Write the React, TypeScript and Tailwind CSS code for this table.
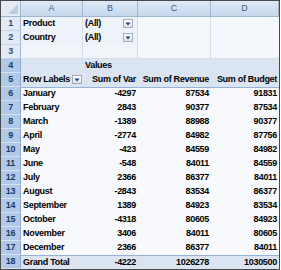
import React from "react";

const cols = "grid grid-cols-[20px_62px_55px_73px_68px]";

const months: [string, number, number, number][] = [
  ["January", -4297, 87534, 91831],
  ["February", 2843, 90377, 87534],
  ["March", -1389, 88988, 90377],
  ["April", -2774, 84982, 87756],
  ["May", -423, 84559, 84982],
  ["June", -548, 84011, 84559],
  ["July", 2366, 86377, 84011],
  ["August", -2843, 83534, 86377],
  ["September", 1389, 84923, 83534],
  ["October", -4318, 80605, 84923],
  ["November", 3406, 84011, 80605],
  ["December", 2366, 86377, 84011],
];

// little filter button used by pivot fields
const DropBtn = () => (
  <span className="w-[10px] h-[9px] border border-[#9fa9b8] bg-gradient-to-b from-white to-[#dde4ee] flex items-center justify-center shrink-0">
    <svg width="6" height="4" viewBox="0 0 6 4">
      <path d="M0.5 0.5 L5.5 0.5 L3 3.5 Z" fill="#1f3c78" />
    </svg>
  </span>
);

const RowNum = ({ n, hot }: { n: number; hot?: boolean }) => (
  <div
    className={`h-[14px] flex items-center justify-center border-r border-b text-[9px] ${
      hot
        ? "bg-[#b1c9e8] border-r-[#8ea9cc] border-b-[#d6e2f1] text-[#1d3a63]"
        : "bg-[#e2eaf5] border-r-[#9eb6ce] border-b-[#c3d2e4] text-[#2f4d74]"
    }`}
  >
    {n}
  </div>
);

const App = () => {
  return (
    <div
      className="w-[281px] h-[270px] bg-white text-black"
      style={{ fontFamily: '"Liberation Sans", Arial, sans-serif' }}
    >
      <div className="w-[280px] h-[270px] border border-[#4a4a4a] overflow-hidden">
        {/* column headers */}
        <div className={`${cols} h-[16px] border-b border-[#9eb6ce] text-[9px] text-[#3d5a80]`}>
          <div className="relative bg-[#e4ebf5] border-r border-[#9eb6ce]">
            <svg className="absolute right-[2px] bottom-[2px]" width="10" height="10" viewBox="0 0 10 10">
              <path d="M10 0 L10 10 L0 10 Z" fill="#c2ccd8" />
            </svg>
          </div>
          {["A", "B", "C", "D"].map((c) => (
            <div
              key={c}
              className="flex items-center justify-center bg-gradient-to-b from-[#dfe9f5] to-[#c6d8ee] border-r border-[#9eb6ce]"
            >
              {c}
            </div>
          ))}
        </div>

        <div className="text-[9px] font-bold tracking-[-0.3px]">
          {/* report filters */}
          {[
            ["Product", "(All)"],
            ["Country", "(All)"],
          ].map(([label, val], i) => (
            <div key={label} className={`${cols} h-[14px]`}>
              <RowNum n={i + 1} />
              <div className="flex items-center pl-[2px] bg-[#eef3f9] border-r border-b border-[#d5dde8]">{label}</div>
              <div className="flex items-center justify-between pl-[2px] pr-[4px] bg-[#eef3f9] border-r border-b border-[#d5dde8]">
                <span>{val}</span>
                <DropBtn />
              </div>
              <div className="bg-[#f4f7fb] border-r border-b border-[#d5dde8]" />
              <div className="bg-[#f4f7fb] border-b border-[#d5dde8]" />
            </div>
          ))}
          <div className={`${cols} h-[14px]`}>
            <RowNum n={3} />
            <div className="bg-[#f1f5fa] border-r border-b border-[#d5dde8]" />
            <div className="bg-[#f1f5fa] border-r border-b border-[#d5dde8]" />
            <div className="bg-[#f4f7fb] border-r border-b border-[#d5dde8]" />
            <div className="bg-[#f4f7fb] border-b border-[#d5dde8]" />
          </div>

          {/* pivot header */}
          <div className={`${cols} h-[14px]`}>
            <RowNum n={4} hot />
            <div className="bg-[#dbe5f1]" />
            <div className="col-span-3 flex items-center pl-[2px] bg-[#dbe5f1]">Values</div>
          </div>
          <div className={`${cols} h-[14px]`}>
            <RowNum n={5} hot />
            <div className="flex items-center justify-between pl-[2px] pr-[1px] bg-[#dbe5f1] border-b border-[#95b3d7]">
              <span>Row Labels</span>
              <DropBtn />
            </div>
            <div className="flex items-center justify-end pr-[2px] bg-[#dbe5f1] border-b border-[#95b3d7]">Sum of Var</div>
            <div className="flex items-center justify-end pr-[2px] bg-[#dbe5f1] border-b border-[#95b3d7]">Sum of Revenue</div>
            <div className="flex items-center justify-end pr-[2px] bg-[#dbe5f1] border-b border-[#95b3d7]">Sum of Budget</div>
          </div>

          {/* month rows */}
          {months.map(([m, v, r, b], i) => (
            <div key={m} className={`${cols} h-[14px] bg-[#f7f9fc]`}>
              <RowNum n={i + 6} hot />
              <div className="flex items-center pl-[2px]">{m}</div>
              <div className="flex items-center justify-end pr-[2px]">{v}</div>
              <div className="flex items-center justify-end pr-[2px]">{r}</div>
              <div className="flex items-center justify-end pr-[2px]">{b}</div>
            </div>
          ))}

          {/* grand total */}
          <div className={`${cols} h-[14px]`}>
            <RowNum n={18} hot />
            <div className="flex items-center pl-[2px] bg-[#dbe5f1] border-t border-[#95b3d7]">Grand Total</div>
            <div className="flex items-center justify-end pr-[2px] bg-[#dbe5f1] border-t border-[#95b3d7]">-4222</div>
            <div className="flex items-center justify-end pr-[2px] bg-[#dbe5f1] border-t border-[#95b3d7]">1026278</div>
            <div className="flex items-center justify-end pr-[2px] bg-[#dbe5f1] border-t border-[#95b3d7]">1030500</div>
          </div>
        </div>
      </div>
    </div>
  );
};

export default App;
